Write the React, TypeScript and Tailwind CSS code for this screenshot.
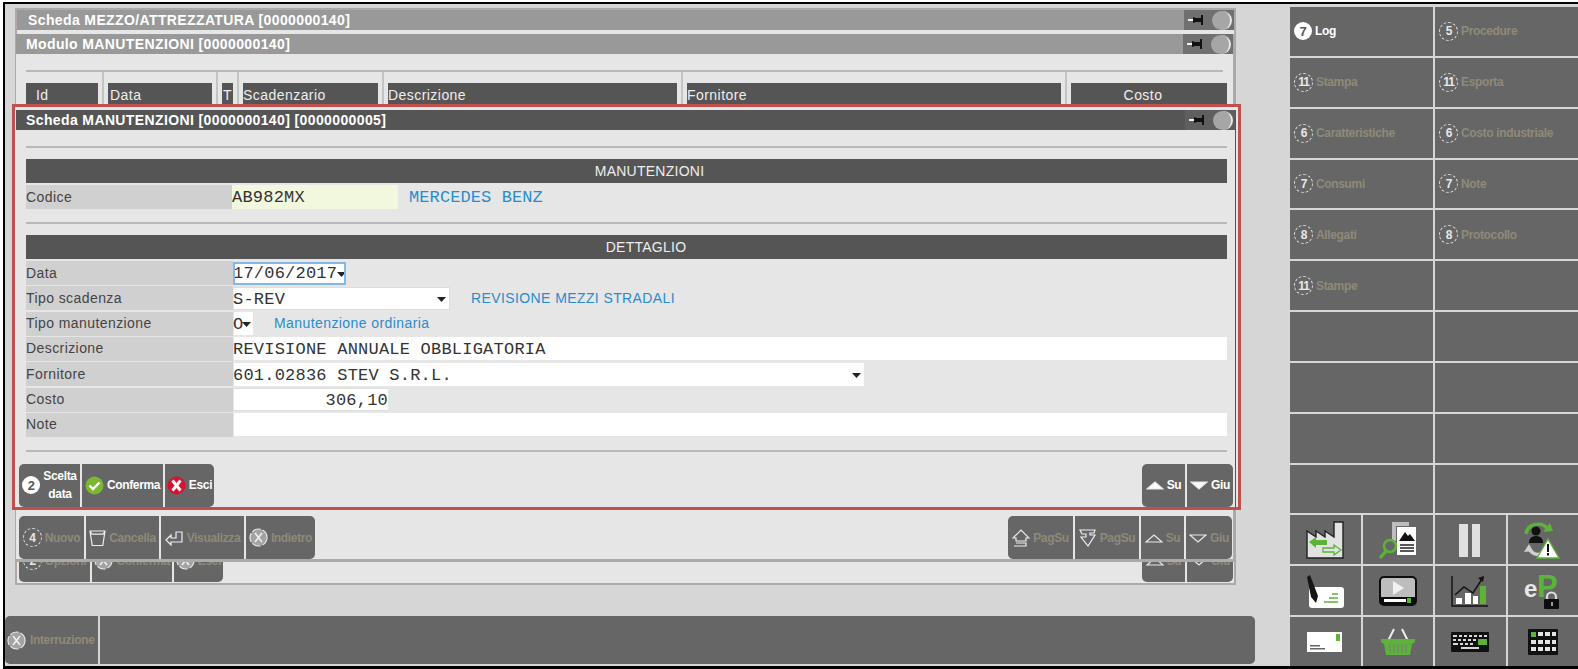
import type { ReactNode } from 'react';

const SANS = 'font-["Liberation_Sans",Arial,sans-serif]';
const MONO = 'font-["Liberation_Mono","Courier_New",monospace]';
const OFF = 'text-[#8f8a78]';

type Key = { n?: string; x?: boolean; on?: boolean };

function KeyIcon({ n, x, on }: Key) {
  if (on) {
    return (
      <span className="flex h-[18px] w-[18px] shrink-0 items-center justify-center rounded-full bg-white text-[13px] font-bold leading-none tracking-normal text-[#555]">
        {n}
      </span>
    );
  }
  if (x) {
    return (
      <svg width="19" height="19" viewBox="0 0 19 19" className="shrink-0">
        <circle cx="9.5" cy="9.5" r="8.5" fill="#a3a3a3" stroke="#e8e8e8" strokeWidth="1.2" strokeDasharray="9 2" />
        <path d="M6 5l7 9M13 5l-7 9" stroke="#f0f0f0" strokeWidth="1.6" />
      </svg>
    );
  }
  return (
    <span className="flex h-[19px] w-[19px] shrink-0 items-center justify-center rounded-full border-[1.5px] border-dashed border-[#e4e4e4] text-[12px] font-bold leading-none tracking-[-1px] text-[#e8e8e8]">
      {n}
    </span>
  );
}

function Check() {
  return (
    <svg width="19" height="19" viewBox="0 0 19 19" className="shrink-0">
      <circle cx="9.5" cy="9.5" r="9" fill="#7cb82f" />
      <path d="M4.5 9.5l3.5 3.5 6.5-6.5" fill="none" stroke="#fff" strokeWidth="2.4" />
    </svg>
  );
}

function RedX() {
  return (
    <svg width="19" height="19" viewBox="0 0 19 19" className="shrink-0">
      <circle cx="9.5" cy="9.5" r="9" fill="#d8112f" />
      <path d="M5.5 4.5l8 10M13.5 4.5l-8 10" stroke="#fff" strokeWidth="3" />
    </svg>
  );
}

function Tri({ up, solid }: { up?: boolean; solid?: boolean }) {
  return (
    <svg width="18" height="12" viewBox="0 0 18 12" className="shrink-0">
      <path
        d={up ? 'M1 10L9 3l8 7z' : 'M1 3h16L9 10z'}
        fill={solid ? '#fff' : 'none'}
        stroke="#e8e8e8"
        strokeWidth="1.2"
      />
    </svg>
  );
}

function Trash() {
  return (
    <svg width="17" height="18" viewBox="0 0 17 18" className="shrink-0">
      <path d="M1 2h15l-2.2 14.5H3.2zM1 2l2 3.2h11L16 2" fill="none" stroke="#eee" strokeWidth="1.2" />
    </svg>
  );
}

function EnterArrow() {
  return (
    <svg width="19" height="16" viewBox="0 0 19 16" className="shrink-0">
      <path d="M1 10l5-5v3h5V2h6v10H6v3z" fill="none" stroke="#eee" strokeWidth="1.2" />
    </svg>
  );
}

function PageIcon({ up }: { up?: boolean }) {
  return (
    <svg width="18" height="18" viewBox="0 0 18 18" className="shrink-0">
      {up ? (
        <path d="M1 9l8-8 8 8h-3v3H4V9zM4 14h10v3H2" fill="none" stroke="#eee" strokeWidth="1.2" />
      ) : (
        <path d="M1 1h15l-1 3h-4v2h5l-7 11-7-9h5V5H3z" fill="none" stroke="#eee" strokeWidth="1.2" />
      )}
    </svg>
  );
}

function Btn({ w, icon, on, children, cls = '' }: { w: string; icon: ReactNode; on?: boolean; children: ReactNode; cls?: string }) {
  return (
    <div
      className={`flex h-[43px] shrink-0 items-center justify-center gap-[3px] bg-[#666] text-[12px] font-bold leading-[18px] tracking-[-0.35px] ${w} ${cls} ${on ? 'text-white' : OFF}`}
    >
      {icon}
      {children}
    </div>
  );
}

function Pin() {
  return (
    <svg width="20" height="12" viewBox="0 0 20 12">
      <path d="M1 5h5v2H1z" fill="#eee" />
      <path d="M6 3l3 1h5V1h2v10h-2V8H9l-3 1z" fill="#111" />
    </svg>
  );
}

function TitleBar({ title, dark, ml = 'pl-[11px]' }: { title: string; dark?: boolean; ml?: string }) {
  return (
    <div
      className={`flex h-[20px] shrink-0 items-center justify-between text-[14px] font-bold leading-none text-white ${ml} ${
        dark ? 'bg-[#555]' : 'bg-[#999]'
      }`}
    >
      <span className="tracking-[0.38px]">{title}</span>
      <div className={`flex h-full w-[50px] items-center gap-[5px] pl-[3px] ${dark ? 'bg-[#5f5f5f]' : 'bg-[#707070]'}`}>
        <Pin />
        <span className="h-[19px] w-[20px] rounded-full border-r-2 border-[#e8e8e8] bg-[#a6a6a6]" />
      </div>
    </div>
  );
}

function Band({ children, pl }: { children: string; pl: string }) {
  return <div className={`flex h-[24px] items-center justify-center bg-[#555] text-[14px] tracking-[0.25px] text-[#eee] ${pl}`}>{children}</div>;
}

function Hr({ cls }: { cls: string }) {
  return <div className={`h-[2px] bg-[#b8b8b8] ${cls}`} />;
}

function Caret({ cls = '' }: { cls?: string }) {
  return (
    <svg width="9" height="5" viewBox="0 0 9 5" className={`shrink-0 ${cls}`}>
      <path d="M0 0h9L4.5 5z" fill="#222" />
    </svg>
  );
}

function Row({ label, children }: { label: string; children?: ReactNode }) {
  return (
    <div className="flex h-[24px] items-center">
      <div className="flex h-full w-[207px] shrink-0 items-center bg-[#d0d0d0] text-[14px] tracking-[0.42px] text-[#444]">{label}</div>
      {children}
    </div>
  );
}

function Field({ w, text, children, cls = '' }: { w: string; text?: string; children?: ReactNode; cls?: string }) {
  return (
    <div className={`flex h-[23px] items-center whitespace-pre bg-white pt-[2px] text-[17px] tracking-[0.22px] text-[#333] ${MONO} ${w} ${cls}`}>
      {text && <span className="-ml-[1px]">{text}</span>}
      {children}
    </div>
  );
}

const columns = [
  { label: 'Id', w: 'w-[72px] pl-[10px]' },
  { label: 'Data', w: 'w-[104px] pl-[2px]' },
  { label: 'T', w: 'w-[11px] pl-[1px]' },
  { label: 'Scadenzario', w: 'w-[135px]' },
  { label: 'Descrizione', w: 'w-[289px]' },
  { label: 'Fornitore', w: 'w-[374px]' },
  { label: 'Costo', w: 'w-[156px] justify-center pr-[12px]' },
];

const menu: [Key, string][] = [
  [{ n: '7', on: true }, 'Log'],
  [{ n: '5' }, 'Procedure'],
  [{ n: '11' }, 'Stampa'],
  [{ n: '11' }, 'Esporta'],
  [{ n: '6' }, 'Caratteristiche'],
  [{ n: '6' }, 'Costo industriale'],
  [{ n: '7' }, 'Consumi'],
  [{ n: '7' }, 'Note'],
  [{ n: '8' }, 'Allegati'],
  [{ n: '8' }, 'Protocollo'],
  [{ n: '11' }, 'Stampe'],
  [{}, ''],
  [{}, ''],
  [{}, ''],
  [{}, ''],
  [{}, ''],
  [{}, ''],
  [{}, ''],
  [{}, ''],
  [{}, ''],
];

const G = '#5db33a';

const tiles: ReactNode[] = [
  <svg key="factory" width="38" height="38" viewBox="0 0 38 38">
    <path d="M1 37V10l9 6V10l9 6V10l9 6V1h9v36z" fill="#e2e2e2" stroke="#222" strokeWidth="1.4" />
    <path d="M3 21l7-5v3h11v5H10v3z" fill={G} />
    <path d="M35 29l-7-5v3H17v4h11v3z" fill="#e2e2e2" stroke={G} strokeWidth="1.3" />
  </svg>,
  <svg key="docs" width="38" height="38" viewBox="0 0 38 38">
    <path d="M13 1h17v4H17v15h-4z" fill="#bdbdbd" />
    <path d="M18 6h19v28H18z" fill="#fff" />
    <path d="M20 20l6-9 3 4 2-2 5 7z" fill="#111" />
    <path d="M21 24h14M21 27h14M21 30h14" stroke="#222" strokeWidth="1.4" />
    <circle cx="11" cy="25" r="6" fill="none" stroke={G} strokeWidth="2.6" />
    <path d="M7 30l-6 7" stroke={G} strokeWidth="3.2" />
  </svg>,
  <svg key="pause" width="24" height="38" viewBox="0 0 24 38">
    <path d="M1 3h9v33H1zM14 3h8v33h-8z" fill="#e0e0e0" />
  </svg>,
  <svg key="sync" width="38" height="38" viewBox="0 0 38 38">
    <path d="M2 13A12 11 0 0 1 23 7" fill="none" stroke={G} strokeWidth="3.4" />
    <path d="M19 11l10-1-3-8z" fill={G} />
    <path d="M5 28q5 7 12 5" fill="none" stroke="#cfcfcf" strokeWidth="3.4" />
    <path d="M0 31l9-1-4-7z" fill="#cfcfcf" />
    <circle cx="12" cy="10" r="4.5" fill="#111" />
    <path d="M5 22q0-7 7-7t7 7z" fill="#111" />
    <path d="M24 18l11 19H13z" fill="#fff" stroke={G} strokeWidth="1.4" />
    <path d="M23 23h2v8h-2zM23 32h2v2.500h-2z" fill="#111" />
  </svg>,
  <svg key="pen" width="38" height="38" viewBox="0 0 38 38">
    <rect x="3" y="15" width="35" height="21" rx="3" fill="#fff" />
    <path d="M18 30h14M23 26h9M26 22h6" stroke={G} strokeWidth="1.6" />
    <path d="M1 5l3-2 8 21-2 7-5-6z" fill="#151515" />
  </svg>,
  <svg key="video" width="38" height="30" viewBox="0 0 38 30">
    <rect x="1" y="1" width="36" height="28" rx="4" fill="#bdbdbd" stroke="#0d0d0d" strokeWidth="2" />
    <path d="M1 21h36v4a4 4 0 0 1-4 4H5a4 4 0 0 1-4-4z" fill="#0d0d0d" />
    <path d="M5 23h22v3H5z" fill="#fff" />
    <path d="M28 22h4v5h-4z" fill={G} />
    <path d="M14 5l11 7-11 7z" fill="#f1f1f1" />
  </svg>,
  <svg key="chart" width="38" height="32" viewBox="0 0 38 32">
    <path d="M1 1v30h36" fill="none" stroke="#111" strokeWidth="1.4" />
    <path d="M5 23h6v6H5zM14 18h6v11h-6zM22 21h5v8h-5z" fill="#fff" />
    <path d="M29 11h6v18h-6z" fill={G} />
    <path d="M4 20l9-8 9 6 9-14" fill="none" stroke="#111" strokeWidth="1.4" />
    <path d="M27 3l6-2-1 6z" fill="#111" />
  </svg>,
  <svg key="ep" width="38" height="46" viewBox="0 -4 38 46">
    <text x="0" y="25" fontFamily="Liberation Sans, sans-serif" fontWeight="700" fontSize="24" fill="#e8e8e8">e</text>
    <text x="13" y="25" fontFamily="Liberation Sans, sans-serif" fontWeight="700" fontSize="31" fill={G}>P</text>
    <path d="M23 28v-3a4.500 4.500 0 0 1 9 0v3" fill="none" stroke="#ddd" strokeWidth="2.2" />
    <rect x="20" y="27" width="15" height="10" rx="1" fill="#0d0d0d" />
    <rect x="27" y="30" width="2" height="4" fill="#999" />
  </svg>,
  <svg key="mail" width="36" height="22" viewBox="0 0 36 22">
    <rect x="0" y="1" width="35" height="20" fill="#fff" />
    <path d="M29 3h4v7h-4z" fill={G} />
    <path d="M3 14h10v1.500H3zM3 17h15v1.500H3z" fill="#666" />
  </svg>,
  <svg key="basket" width="36" height="28" viewBox="0 0 36 28">
    <path d="M14 1L8 13M22 1l6 12" stroke="#eee" strokeWidth="2" />
    <path d="M1 11h34v3l-3 2-2 11H6L4 16l-3-2z" fill={G} />
    <path d="M10 16v9M14 16v9M18 16v9M22 16v9M26 16v9" stroke="#7d7d7d" strokeWidth="1.2" />
  </svg>,
  <svg key="kbd" width="38" height="20" viewBox="0 0 38 20">
    <rect width="38" height="20" rx="1" fill="#111" />
    <path d="M2 3h4v2H2zM8 3h3v2H8zM13 3h3v2h-3zM18 3h3v2h-3zM23 3h3v2h-3zM28 3h3v2h-3zM33 3h3v2h-3zM2 7h3v2H2zM7 7h3v2H7zM12 7h3v2h-3zM17 7h3v2h-3zM22 7h3v2h-3zM2 11h5v2H2zM9 11h3v2H9zM14 11h3v2h-3zM19 11h3v2h-3zM10 15h18v2H10z" fill="#d8d8d8" />
    <path d="M27 7h9v6h-9z" fill={G} />
  </svg>,
  <svg key="pad" width="30" height="26" viewBox="0 0 30 26">
    <rect width="30" height="26" rx="1" fill="#111" />
    <path d="M3 3h5v5H3z" fill={G} />
    <path d="M10 3h5v4h-5zM17 3h5v4h-5zM24 3h4v4h-4zM3 11h5v4H3zM10 11h5v4h-5zM17 11h5v4h-5zM24 11h4v4h-4zM3 18h5v4H3zM10 18h5v4h-5zM17 18h5v4h-5zM24 18h4v4h-4z" fill="#e4e4e4" />
  </svg>,
];

export default function App() {
  return (
    <div className={`h-[669px] w-[1578px] overflow-hidden bg-white pl-[3px] pt-[2px] ${SANS}`}>
      <div className="flex h-[667px] border-b-[3px] border-l-2 border-t-2 border-black bg-[#d6d6d6]">
        {/* Left side: stacked windows over the bottom bar */}
        <div className="relative flex w-[1285px] shrink-0 flex-col justify-end pb-[2px]">
          {/* Scheda MEZZO window */}
          <div className="absolute left-[10px] top-[4px] flex h-[577px] w-[1221px] flex-col justify-between border-2 border-[#aaa] bg-[#e6e6e6]">
            <TitleBar title="Scheda MEZZO/ATTREZZATURA [0000000140]" />
            <div className="flex justify-between pb-[1px] pl-[2px] pr-[1px]">
              <div className="flex gap-[2px]">
                <Btn w="w-[71px]" cls="rounded-l-[5px]" icon={<KeyIcon n="2" />}>Opzioni</Btn>
                <Btn w="w-[80px]" icon={<KeyIcon x />}>Conferma</Btn>
                <Btn w="w-[49px]" cls="rounded-r-[5px]" icon={<KeyIcon x />}>Esci</Btn>
              </div>
              <div className="flex gap-[2px]">
                <Btn w="w-[43px]" cls="rounded-l-[5px]" icon={<Tri up />}>Su</Btn>
                <Btn w="w-[46px]" cls="rounded-r-[5px]" icon={<Tri />}>Giu</Btn>
              </div>
            </div>
          </div>

          {/* Modulo MANUTENZIONI window */}
          <div className="absolute left-[11px] top-[30px] flex h-[528px] w-[1219px] flex-col justify-between border-b-[3px] border-r-2 border-[#aaa] bg-[#e6e6e6]">
            <div>
              <TitleBar title="Modulo MANUTENZIONI [0000000140]" ml="pl-[10px]" />
              <div className="mx-[10px] mt-[16px] border-t-2 border-[#b8b8b8]">
                <div className="flex h-[34px]">
                  {columns.map((c, i) => (
                    <div key={c.label} className="flex">
                      {i > 0 && <div className="mx-[4px] w-[2px] bg-[#c4c4c4]" />}
                      <div className={`mt-[11px] flex h-[24px] items-center bg-[#555] text-[14px] tracking-[0.45px] text-[#eee] ${c.w}`}>{c.label}</div>
                    </div>
                  ))}
                </div>
              </div>
            </div>
            <div className="flex justify-between pl-[3px] pr-[1px]">
              <div className="flex gap-[2px]">
                <Btn w="w-[65px]" cls="rounded-l-[5px]" icon={<KeyIcon n="4" />}>Nuovo</Btn>
                <Btn w="w-[73px]" icon={<Trash />}>Cancella</Btn>
                <Btn w="w-[83px]" icon={<EnterArrow />}>Visualizza</Btn>
                <Btn w="w-[69px]" cls="rounded-r-[5px]" icon={<KeyIcon x />}>Indietro</Btn>
              </div>
              <div className="flex gap-[2px]">
                <Btn w="w-[65px]" cls="rounded-l-[5px]" icon={<PageIcon up />}>PagSu</Btn>
                <Btn w="w-[64px]" icon={<PageIcon />}>PagSu</Btn>
                <Btn w="w-[43px]" icon={<Tri up />}>Su</Btn>
                <Btn w="w-[46px]" cls="rounded-r-[5px]" icon={<Tri />}>Giu</Btn>
              </div>
            </div>
          </div>

          {/* Scheda MANUTENZIONI window, highlighted in red */}
          <div className="absolute left-[7px] top-[100px] h-[406px] w-[1229px] border-[3px] border-[#c0504d] bg-[#e6e6e6] pt-[3px]">
            <div className="ml-[1px] mr-[2px] flex h-[397px] flex-col border-r border-[#555]">
              <TitleBar title="Scheda MANUTENZIONI [0000000140] [0000000005]" dark ml="pl-[10px]" />
              <div className="flex flex-col pl-[10px] pr-[8px]">
                <Hr cls="mt-[16px]" />
                <div className="mt-[11px]"><Band pl="pl-[46px]">MANUTENZIONI</Band></div>
                <div className="mt-[2px]">
                  <Row label="Codice">
                    <div className={`-ml-[1px] flex h-full w-[166px] items-center bg-[#f1f8dd] pt-[2px] text-[17px] tracking-[0.22px] text-[#333] ${MONO}`}>AB982MX</div>
                    <span className={`ml-[11px] pt-[2px] text-[17px] tracking-[0.1px] text-[#2a8ccc] ${MONO}`}>MERCEDES BENZ</span>
                  </Row>
                </div>
                <Hr cls="mt-[13px]" />
                <div className="mt-[11px]"><Band pl="pl-[39px]">DETTAGLIO</Band></div>
                <div className="mt-[2px] flex flex-col gap-[1.33px]">
                  <Row label="Data">
                    <Field w="w-[113px]" cls="outline-2 -outline-offset-2 outline-[#84b7e3] justify-between pr-[2px]">
                      17/06/2017<Caret />
                    </Field>
                  </Row>
                  <Row label="Tipo scadenza">
                    <Field w="w-[216px] ml-[1px]" text="S-REV" cls="justify-between pr-[3px] border-y border-r border-[#ddd]">
                      <Caret />
                    </Field>
                    <span className="ml-[21px] text-[14px] tracking-[0.4px] text-[#2a8ccc]">REVISIONE MEZZI STRADALI</span>
                  </Row>
                  <Row label="Tipo manutenzione">
                    <Field w="w-[19px] ml-[1px]" text="O">
                      <Caret cls="-ml-[1px]" />
                    </Field>
                    <span className="ml-[21px] text-[14px] tracking-[0.42px] text-[#2a8ccc]">Manutenzione ordinaria</span>
                  </Row>
                  <Row label="Descrizione">
                    <Field w="flex-1 ml-[1px]" text="REVISIONE ANNUALE OBBLIGATORIA" />
                  </Row>
                  <Row label="Fornitore">
                    <Field w="w-[630px] ml-[1px]" text="601.02836 STEV S.R.L." cls="justify-between pr-[3px]">
                      <Caret />
                    </Field>
                  </Row>
                  <Row label="Costo">
                    <Field w="w-[154px] ml-[1px]" cls="justify-end border-y border-[#ddd]">306,10</Field>
                  </Row>
                  <Row label="Note">
                    <Field w="flex-1 ml-[1px]" />
                  </Row>
                </div>
                <Hr cls="mt-[13px]" />
              </div>
              <div className="mt-[12px] flex justify-between pl-[3px] pr-[2px]">
                <div className="flex gap-[2px]">
                  <Btn w="w-[61px]" on cls="rounded-l-[5px]" icon={<KeyIcon n="2" on />}>
                    <span className="text-center">Scelta<br />data</span>
                  </Btn>
                  <Btn w="w-[81px]" on icon={<Check />}>Conferma</Btn>
                  <Btn w="w-[49px]" on cls="rounded-r-[5px]" icon={<RedX />}>Esci</Btn>
                </div>
                <div className="flex gap-[2px]">
                  <Btn w="w-[43px]" on cls="rounded-l-[5px]" icon={<Tri up solid />}>Su</Btn>
                  <Btn w="w-[46px]" on cls="rounded-r-[5px]" icon={<Tri solid />}>Giu</Btn>
                </div>
              </div>
            </div>
          </div>

          {/* Bottom bar */}
          <div className="flex h-[48px] w-[1250px] gap-[2px]">
            <div className={`flex w-[93px] items-center gap-[4px] rounded-l-[5px] bg-[#666] pl-[2px] text-[12px] font-bold tracking-[-0.35px] ${OFF}`}>
              <KeyIcon x />
              Interruzione
            </div>
            <div className="flex-1 rounded-r-[5px] bg-[#666]" />
          </div>
        </div>

        {/* Right side: function keys and shortcut tiles */}
        <div className="mt-[3px] grid h-[659px] flex-1 grid-cols-4 grid-rows-13 gap-[2px] self-start">
          {menu.map(([k, label], i) => (
            <div
              key={i}
              className={`col-span-2 flex items-center gap-[3px] bg-[#666] pl-[4px] text-[12px] font-bold tracking-[-0.35px] ${
                k.on ? 'text-white' : OFF
              }`}
            >
              {k.n && <KeyIcon {...k} />}
              {label}
            </div>
          ))}
          {tiles.map((t, i) => (
            <div key={i} className="flex items-center justify-center bg-[#666]">
              {t}
            </div>
          ))}
        </div>
      </div>
    </div>
  );
}
